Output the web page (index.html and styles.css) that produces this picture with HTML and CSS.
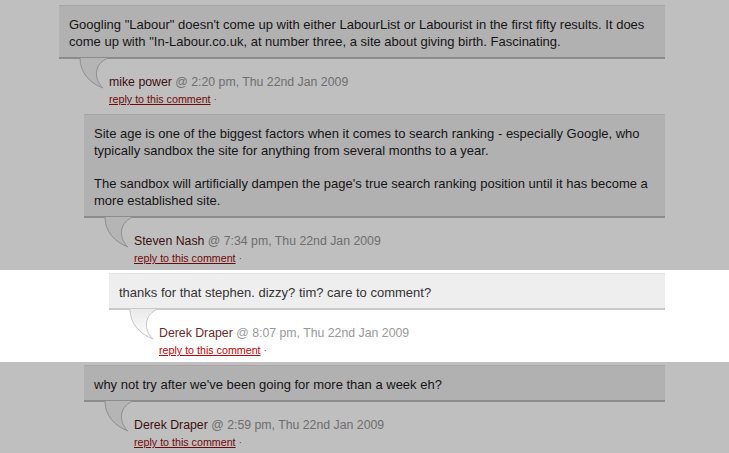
FILE: index.html
```html
<!DOCTYPE html>
<html>
<head>
<meta charset="utf-8">
<link rel="stylesheet" href="styles.css">
</head>
<body>
<ol class="comments">
  <li class="row dim">
    <div class="comment depth0">
      <div class="box"><p>Googling "Labour" doesn't come up with either LabourList or Labourist in the first fifty results. It does come up with "In-Labour.co.uk, at number three, a site about giving birth. Fascinating.</p></div>
      <svg class="tail" width="32" height="31" viewBox="0 0 32 31"><path class="tail-fill" d="M1,0 C1,15 11,25 24,30 C15,22 14,6 29,0 Z"/><path class="tail-line" d="M1,0 C1,15 11,25 24,30 C15,22 14,6 29,0"/></svg>
      <div class="meta">
        <div class="byline"><span class="author">mike power</span> <span class="date">@ 2:20 pm, Thu 22nd Jan 2009</span></div>
        <div class="actions"><a href="#" class="reply">reply to this comment</a> <span class="sep">·</span></div>
      </div>
    </div>
  </li>
  <li class="row dim">
    <div class="comment depth1">
      <div class="box"><p>Site age is one of the biggest factors when it comes to search ranking - especially Google, who typically sandbox the site for anything from several months to a year.</p><p>The sandbox will artificially dampen the page's true search ranking position until it has become a more established site.</p></div>
      <svg class="tail" width="32" height="31" viewBox="0 0 32 31"><path class="tail-fill" d="M1,0 C1,15 11,25 24,30 C15,22 14,6 29,0 Z"/><path class="tail-line" d="M1,0 C1,15 11,25 24,30 C15,22 14,6 29,0"/></svg>
      <div class="meta">
        <div class="byline"><span class="author">Steven Nash</span> <span class="date">@ 7:34 pm, Thu 22nd Jan 2009</span></div>
        <div class="actions"><a href="#" class="reply">reply to this comment</a> <span class="sep">·</span></div>
      </div>
    </div>
  </li>
  <li class="row lit">
    <div class="comment depth2">
      <div class="box"><p>thanks for that stephen. dizzy? tim? care to comment?</p></div>
      <svg class="tail" width="32" height="31" viewBox="0 0 32 31"><defs><linearGradient id="tg" x1="0" y1="0" x2="0" y2="1"><stop offset="0" stop-color="#e9e9e9"/><stop offset="1" stop-color="#ffffff"/></linearGradient></defs><path class="tail-fill" fill="url(#tg)" d="M1,0 C1,15 11,25 24,30 C15,22 14,6 29,0 Z"/><path class="tail-line" d="M1,0 C1,15 11,25 24,30 C15,22 14,6 29,0"/></svg>
      <div class="meta">
        <div class="byline"><span class="author">Derek Draper</span> <span class="date">@ 8:07 pm, Thu 22nd Jan 2009</span></div>
        <div class="actions"><a href="#" class="reply">reply to this comment</a> <span class="sep">·</span></div>
      </div>
    </div>
  </li>
  <li class="row dim">
    <div class="comment depth1">
      <div class="box"><p>why not try after we've been going for more than a week eh?</p></div>
      <svg class="tail" width="32" height="31" viewBox="0 0 32 31"><path class="tail-fill" d="M1,0 C1,15 11,25 24,30 C15,22 14,6 29,0 Z"/><path class="tail-line" d="M1,0 C1,15 11,25 24,30 C15,22 14,6 29,0"/></svg>
      <div class="meta">
        <div class="byline"><span class="author">Derek Draper</span> <span class="date">@ 2:59 pm, Thu 22nd Jan 2009</span></div>
        <div class="actions"><a href="#" class="reply">reply to this comment</a> <span class="sep">·</span></div>
      </div>
    </div>
  </li>
</ol>
</body>
</html>
```
FILE: styles.css
```css
html, body {
  margin: 0;
  padding: 0;
  background: #bfbfbf;
  font-family: "Liberation Sans", Arial, sans-serif;
  font-size: 13px;
  line-height: 17px;
}
.comments {
  list-style: none;
  margin: 2px 0 0 0;
  padding: 0;
}
.row {
  padding: 3px 64px 3px 0;
}
.row.dim { background: #bfbfbf; }
.row.lit { background: #ffffff; }
.comment { position: relative; }
.depth0 { margin-left: 59px; }
.depth1 { margin-left: 84px; }
.depth2 { margin-left: 109px; }
.box {
  padding: 10px 10px 7px 10px;
  border-top: 1px solid;
  border-bottom: 2px solid;
}
.box p { margin: 0; }
.box p + p { margin-top: 16px; }
.dim .box {
  background: #b1b1b1;
  border-top-color: #a6a6a6;
  border-bottom-color: #8c8c8c;
  color: #151515;
}
.lit .box {
  background: #eeeeee;
  border-top-color: #e3e3e3;
  border-bottom-color: #c9c9c9;
  color: #333333;
}
.tail {
  position: absolute;
  left: 20px;
  margin-top: -1px;
  display: block;
}
.tail-line { fill: none; stroke-width: 1; }
.dim .tail-fill { fill: #b5b5b5; }
.dim .tail-line { stroke: #8e8e8e; }
.lit .tail-line { stroke: #c6c6c6; }
.meta {
  padding: 15px 0 0 50px;
}
.byline { font-size: 12.3px; line-height: 17px; }
.actions { font-size: 10.7px; line-height: 17px; }
.dim .author { color: #3d0f0f; }
.dim .date { color: #6e6e6e; }
.dim .reply { color: #6f0a0a; }
.dim .sep { color: #555; }
.lit .author { color: #6b2b2b; }
.lit .date { color: #999999; }
.lit .reply { color: #cc0000; }
.lit .sep { color: #666; }
.reply { text-decoration: underline; }
```
